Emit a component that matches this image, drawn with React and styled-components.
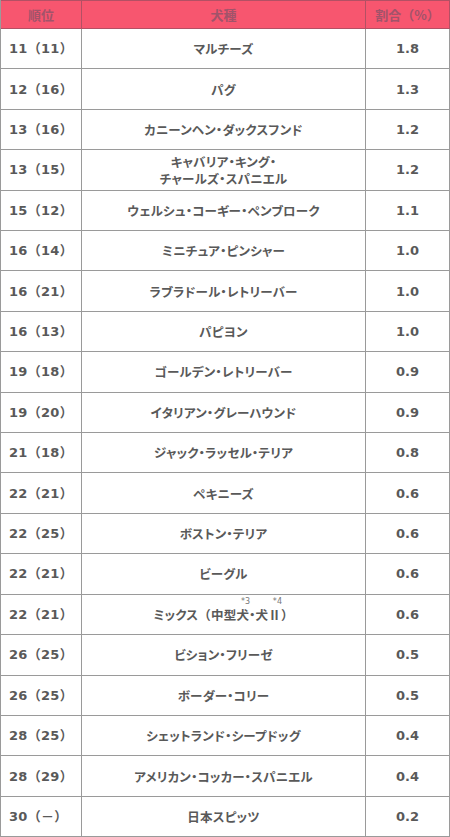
import React from 'react'
import styled, { createGlobalStyle } from 'styled-components'

const GlobalStyle = createGlobalStyle`
  html, body {
    margin: 0;
    padding: 0;
    background: #fff;
  }
  body {
    font-family: "DejaVu Sans", "Noto Sans CJK JP", sans-serif;
  }
`;

const Table = styled.div`
  width: 450px;
  height: 837px;
  display: flex;
  flex-direction: column;
  box-sizing: border-box;
  border-left: 1px solid #9a9a9a;
  color: #595959;
`;

const Row = styled.div`
  display: grid;
  grid-template-columns: 81px 284px 1fr;
  flex: ${p => (p.$head ? '0 0 29px' : '1 1 0')};
  background: ${p => (p.$head ? '#f7566f' : '#fff')};
  border-top: ${p => (p.$head ? '1px solid #b35064' : 'none')};
  box-sizing: border-box;
`;

const Cell = styled.div`
  box-sizing: border-box;
  border-right: 1px solid #9a9a9a;
  border-bottom: 1px solid #9a9a9a;
  display: flex;
  align-items: center;
  justify-content: ${p => (p.$left ? 'flex-start' : 'center')};
  padding-left: ${p => (p.$left ? '8px' : '0')};
  text-align: center;
  font-size: 13px;
  font-weight: bold;
  line-height: 17px;
`;

const HeadCell = styled(Cell)`
  color: #a2536a;
  border-color: #b35064;
  font-family: "Noto Sans CJK JP", sans-serif;
  font-size: 13px;
  font-weight: bold;
`;

const Name = styled.span`
  font-family: "Noto Sans CJK JP", sans-serif;
  font-size: 12.5px;
  font-weight: bold;
  font-feature-settings: "palt";
  letter-spacing: 0.2px;
`;

const Paren = styled.span`
  font-feature-settings: normal;
`;

const Rank = styled.span`
  letter-spacing: 0.3px;
`;

const Note = styled.span`
  position: relative;
`;

const Sup = styled.span`
  position: absolute;
  left: 50%;
  top: -12px;
  transform: translateX(-20%);
  font-family: "DejaVu Sans", sans-serif;
  font-size: 8px;
  font-weight: normal;
  color: #777;
  white-space: nowrap;
`;

const rows = [
  ['11', '11', 'マルチーズ', '1.8'],
  ['12', '16', 'パグ', '1.3'],
  ['13', '16', 'カニーンヘン・ダックスフンド', '1.2'],
  ['13', '15', <>キャバリア・キング・<br />チャールズ・スパニエル</>, '1.2'],
  ['15', '12', 'ウェルシュ・コーギー・ペンブローク', '1.1'],
  ['16', '14', 'ミニチュア・ピンシャー', '1.0'],
  ['16', '21', 'ラブラドール・レトリーバー', '1.0'],
  ['16', '13', 'パピヨン', '1.0'],
  ['19', '18', 'ゴールデン・レトリーバー', '0.9'],
  ['19', '20', 'イタリアン・グレーハウンド', '0.9'],
  ['21', '18', 'ジャック・ラッセル・テリア', '0.8'],
  ['22', '21', 'ペキニーズ', '0.6'],
  ['22', '25', 'ボストン・テリア', '0.6'],
  ['22', '21', 'ビーグル', '0.6'],
  ['22', '21', <>ミックス<Paren>（</Paren>中型<Note>犬<Sup>*3</Sup></Note>・犬<Note>Ⅱ<Sup>*4</Sup></Note><Paren>）</Paren></>, '0.6'],
  ['26', '25', 'ビション・フリーゼ', '0.5'],
  ['26', '25', 'ボーダー・コリー', '0.5'],
  ['28', '25', 'シェットランド・シープドッグ', '0.4'],
  ['28', '29', 'アメリカン・コッカー・スパニエル', '0.4'],
  ['30', '－', '日本スピッツ', '0.2'],
]

const App = () => {
  return (
    <>
      <GlobalStyle />
      <Table>
        <Row $head>
          <HeadCell>順位</HeadCell>
          <HeadCell>犬種</HeadCell>
          <HeadCell>割合（%）</HeadCell>
        </Row>
        {rows.map((r, i) => (
          <Row key={i}>
            <Cell $left><Rank>{r[0]}（{r[1]}）</Rank></Cell>
            <Cell><Name>{r[2]}</Name></Cell>
            <Cell>{r[3]}</Cell>
          </Row>
        ))}
      </Table>
    </>
  )
}

export default App
